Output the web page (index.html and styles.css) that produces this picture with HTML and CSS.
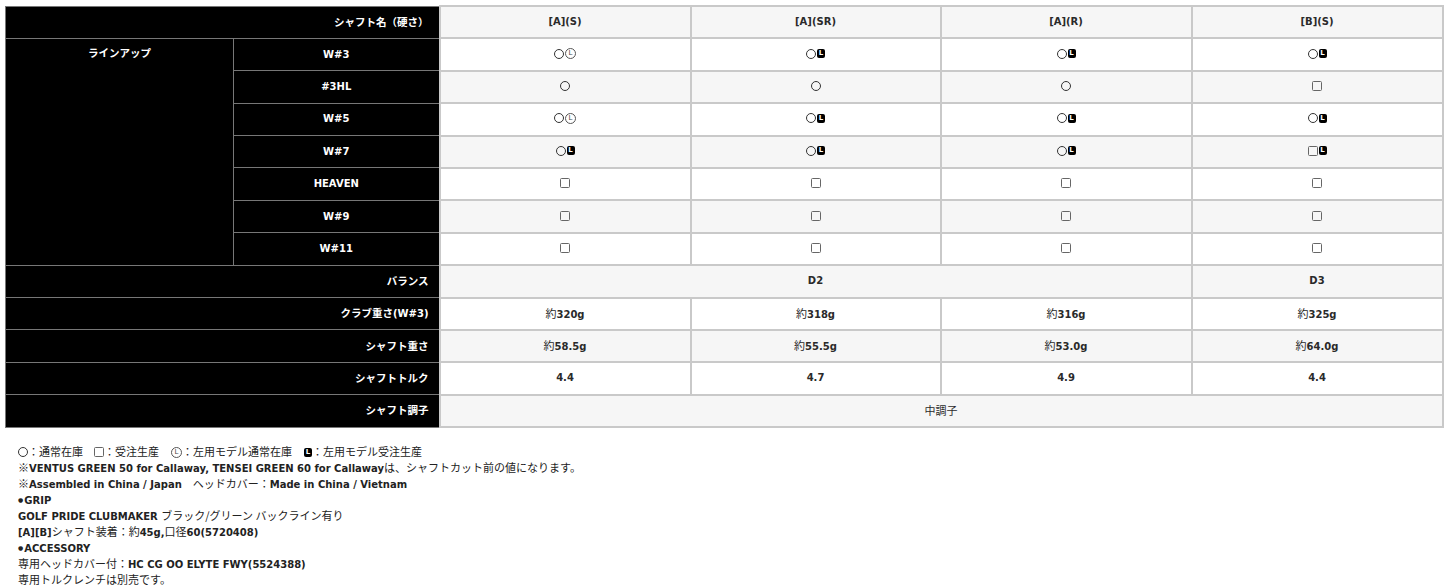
FILE: index.html
```html
<!DOCTYPE html>
<html lang="ja">
<head>
<meta charset="utf-8">
<title>Spec</title>
<link rel="stylesheet" href="styles.css">
</head>
<body>
<div class="page">
<table class="spec">
  <colgroup>
    <col class="c1"><col class="c2"><col class="cd"><col class="cd2"><col class="cd"><col class="cd">
  </colgroup>
  <tr class="g">
    <th colspan="2" class="r"><span class="jl">シャフト名（硬さ）</span></th>
    <td>[A](S)</td><td>[A](SR)</td><td>[A](R)</td><td>[B](S)</td>
  </tr>
  <tr>
    <th rowspan="7" class="top"><span class="jl">ラインアップ</span></th>
    <th>W#3</th>
    <td><span class="c"></span><span class="cl">L</span></td>
    <td><span class="c"></span><span class="bl">L</span></td>
    <td><span class="c"></span><span class="bl">L</span></td>
    <td><span class="c"></span><span class="bl">L</span></td>
  </tr>
  <tr class="g">
    <th>#3HL</th>
    <td><span class="c"></span></td>
    <td><span class="c"></span></td>
    <td><span class="c"></span></td>
    <td><span class="s"></span></td>
  </tr>
  <tr>
    <th>W#5</th>
    <td><span class="c"></span><span class="cl">L</span></td>
    <td><span class="c"></span><span class="bl">L</span></td>
    <td><span class="c"></span><span class="bl">L</span></td>
    <td><span class="c"></span><span class="bl">L</span></td>
  </tr>
  <tr class="g">
    <th>W#7</th>
    <td><span class="c"></span><span class="bl">L</span></td>
    <td><span class="c"></span><span class="bl">L</span></td>
    <td><span class="c"></span><span class="bl">L</span></td>
    <td><span class="s"></span><span class="bl">L</span></td>
  </tr>
  <tr>
    <th>HEAVEN</th>
    <td><span class="s"></span></td>
    <td><span class="s"></span></td>
    <td><span class="s"></span></td>
    <td><span class="s"></span></td>
  </tr>
  <tr class="g">
    <th>W#9</th>
    <td><span class="s"></span></td>
    <td><span class="s"></span></td>
    <td><span class="s"></span></td>
    <td><span class="s"></span></td>
  </tr>
  <tr>
    <th>W#11</th>
    <td><span class="s"></span></td>
    <td><span class="s"></span></td>
    <td><span class="s"></span></td>
    <td><span class="s"></span></td>
  </tr>
  <tr class="g">
    <th colspan="2" class="r"><span class="jl">バランス</span></th>
    <td colspan="3">D2</td><td>D3</td>
  </tr>
  <tr>
    <th colspan="2" class="r"><span class="jl">クラブ重さ</span>(W#3)</th>
    <td><span class="jp">約</span>320g</td><td><span class="jp">約</span>318g</td><td><span class="jp">約</span>316g</td><td><span class="jp">約</span>325g</td>
  </tr>
  <tr class="g">
    <th colspan="2" class="r"><span class="jl">シャフト重さ</span></th>
    <td><span class="jp">約</span>58.5g</td><td><span class="jp">約</span>55.5g</td><td><span class="jp">約</span>53.0g</td><td><span class="jp">約</span>64.0g</td>
  </tr>
  <tr>
    <th colspan="2" class="r"><span class="jl">シャフトトルク</span></th>
    <td>4.4</td><td>4.7</td><td>4.9</td><td>4.4</td>
  </tr>
  <tr class="g">
    <th colspan="2" class="r"><span class="jl">シャフト調子</span></th>
    <td colspan="4"><span class="jp">中調子</span></td>
  </tr>
</table>

<div class="notes">
  <p><span class="c"></span><span class="jp">：通常在庫　</span><span class="s"></span><span class="jp">：受注生産　</span><span class="cl">L</span><span class="jp">：左用モデル通常在庫　</span><span class="bl">L</span><span class="jp">：左用モデル受注生産</span></p>
  <p><span class="jp">※</span>VENTUS GREEN 50 for Callaway, TENSEI GREEN 60 for Callaway<span class="jp">は、シャフトカット前の値になります。</span></p>
  <p><span class="jp">※</span>Assembled in China / Japan<span class="jp">　ヘッドカバー：</span>Made in China / Vietnam</p>
  <p><span class="dot">●</span>GRIP</p>
  <p>GOLF PRIDE CLUBMAKER <span class="jp">ブラック/グリーン バックライン有り</span></p>
  <p>[A][B]<span class="jp">シャフト装着：約</span>45g,<span class="jp">口径</span>60(5720408)</p>
  <p><span class="dot">●</span>ACCESSORY</p>
  <p><span class="jp">専用ヘッドカバー付：</span>HC CG OO ELYTE FWY(5524388)</p>
  <p><span class="jp">専用トルクレンチは別売です。</span></p>
</div>
</div>
</body>
</html>
```
FILE: styles.css
```css
html, body {
  margin: 0;
  padding: 0;
  background: #fff;
}
body {
  font-family: "DejaVu Sans", "Noto Sans CJK JP", sans-serif;
  color: #222;
}
.page {
  padding: 5px 3px 0 5px;
}
.spec {
  width: 1437px;
  table-layout: fixed;
  border-collapse: collapse;
  font-size: 10px;
  font-weight: 700;
}
.c1 { width: 228px; }
.c2 { width: 206px; }
.cd { width: 251px; }
.cd2 { width: 250px; }
.spec th,
.spec td {
  height: 30.4px;
  padding: 0;
  text-align: center;
  vertical-align: middle;
  line-height: 14px;
}
.spec th {
  background: #000;
  color: #fff;
  border: 1px solid #777;
}
.spec th.r {
  text-align: right;
  padding-right: 10px;
}
.spec th.top {
  vertical-align: top;
  padding-top: 7px;
}
.spec td {
  background: #fff;
  border: 2px solid #c9c9c9;
  color: #2a2a2a;
}
.spec tr.g td {
  background: #f6f6f6;
}
.jl {
  font-family: "Noto Sans CJK JP", sans-serif;
  font-size: 10.5px;
  font-weight: 700;
}
.jp {
  font-family: "Noto Sans CJK JP", sans-serif;
  font-size: 11px;
  font-weight: 400;
}
.dot {
  font-family: "DejaVu Sans", sans-serif;
  font-size: 6px;
  position: relative;
  top: -2px;
  margin-right: 1px;
}
.c, .s, .cl, .bl {
  display: inline-block;
  vertical-align: middle;
  box-sizing: border-box;
  position: relative;
  top: -1px;
}
.c {
  width: 10px;
  height: 10px;
  border: 1px solid #333;
  border-radius: 50%;
}
.s {
  width: 10px;
  height: 10px;
  border: 1.5px solid #666;
  border-radius: 1.5px;
}
.cl {
  width: 11px;
  height: 11px;
  border: 1px solid #555;
  border-radius: 50%;
  font-size: 7px;
  line-height: 9px;
  font-weight: 400;
  color: #444;
  text-align: center;
  margin-left: 1px;
}
.bl {
  width: 8px;
  height: 9px;
  background: #000;
  border-radius: 2px;
  color: #fff;
  font-size: 7px;
  line-height: 9px;
  font-weight: 700;
  text-align: center;
  margin-left: 1px;
}
.notes {
  padding: 17px 0 0 13px;
  font-size: 10px;
  line-height: 16px;
  font-weight: 700;
  color: #222;
}
.notes p {
  margin: 0;
  white-space: nowrap;
}
.notes .jp,
.notes .dot {
  line-height: 8px;
}
```
